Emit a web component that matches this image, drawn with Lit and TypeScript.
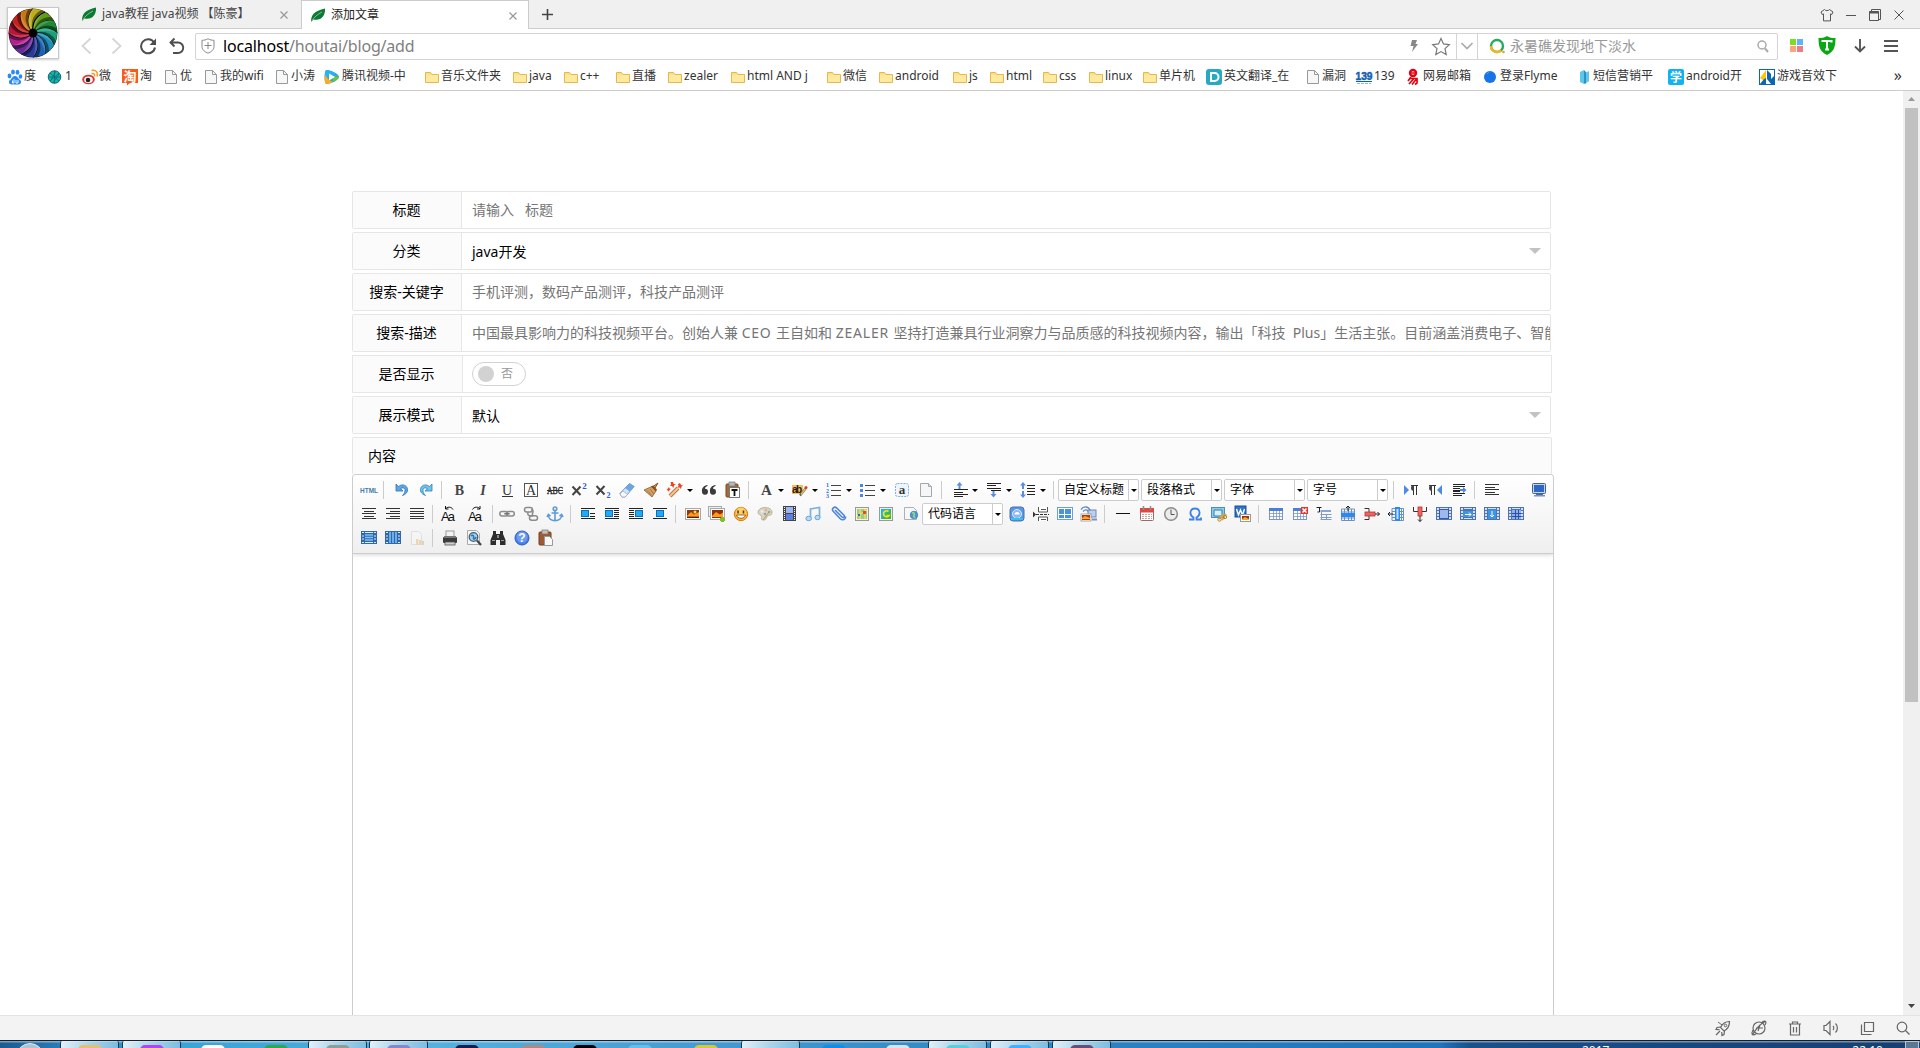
import { LitElement, html, svg, css, nothing, type SVGTemplateResult, type TemplateResult } from "lit";
import { customElement } from "lit/decorators.js";
import { styleMap } from "lit/directives/style-map.js";

type G = SVGTemplateResult;

const lines = (rows: number[][], color = "#333") =>
  svg`${rows.map(([x, y, w]) => svg`<rect x=${x} y=${y} width=${w} height="1" fill=${color}/>`)}`;

const grid = (color: string, head: string, fill = "#fff") => svg`
  <rect x="1.5" y="2.5" width="13" height="11" fill=${fill} stroke=${color}/>
  <rect x="1" y="2" width="14" height="3" fill=${head}/>
  <path d="M5.5 5v9M8.5 5v9M11.5 5v9M1 7.5h14M1 10.5h14" stroke=${color} fill="none" opacity=".8"/>`;

const blueTable = (inner: G) => svg`
  <rect x="0" y="1" width="16" height="13" fill="#5073ae"/>
  <path d="M1 2h2v2H1zM4 2h8v1H4zM13 2h2v2h-2zM1 5h2v2H1zM1 8h2v2H1zM13 5h2v2h-2zM13 8h2v2h-2zM1 11h2v2H1zM13 11h2v2h-2z" fill="#cfe2f8"/>
  ${inner}`;

const float = (x: number, rows: number[][]) => svg`
  <rect x=${x} y="4" width="8" height="7" fill="#0a6fc0"/><rect x=${x + 1} y="5" width="6" height="5" fill="#23a9f5"/>
  ${lines(rows, "#222")}`;

const icons: Record<string, G> = {
  html: svg`<text x="9" y="10.500" font-size="8" font-weight="700" text-anchor="middle" textLength="18" lengthAdjust="spacingAndGlyphs" fill="#3f7cab" font-family="Liberation Sans">HTML</text>`,
  undo: svg`<path d="M2 2v7h7L6.600 6.800C9 5 11.500 6 11 9c-.2 1.600-1 3-2.500 4.500C13 12 14.500 8.500 13 5.500 11.500 2.500 7.500 2 4.500 4.500z" fill="#5aa7e6" stroke="#2d72b8" stroke-width=".8"/>`,
  redo: svg`<path d="M14 2v7H7l2.400-2.200C7 5 4.500 6 5 9c.2 1.600 1 3 2.500 4.500C3 12 1.500 8.500 3 5.500 4.500 2.500 8.500 2 11.500 4.500z" fill="#6fc0ec" stroke="#2d82b8" stroke-width=".8"/>`,
  bold: svg`<text x="8.500" y="13" font-size="14" font-weight="700" text-anchor="middle" fill="#444">B</text>`,
  italic: svg`<text x="8" y="13" font-size="14" font-weight="700" font-style="italic" text-anchor="middle" fill="#444">I</text>`,
  underline: svg`<text x="8" y="12.500" font-size="14" text-anchor="middle" fill="#333">U</text><rect x="3" y="14" width="11" height="1" fill="#333"/>`,
  abox: svg`<rect x="1.500" y="1.500" width="13" height="13" fill="#fff" stroke="#555"/><text x="8" y="13" font-size="14" text-anchor="middle" fill="#333">A</text>`,
  strike: svg`<text x="8" y="12" font-size="10" text-anchor="middle" textLength="16" lengthAdjust="spacingAndGlyphs" fill="#222" stroke="#222" stroke-width=".3">ABC</text><rect x="0" y="8" width="16" height="1" fill="#333"/>`,
  sup: svg`<path d="M1.500 4.500l8 8.500M9.500 4.500L1.500 13" stroke="#444" stroke-width="2"/><text x="13.500" y="6.500" font-size="9" font-weight="700" text-anchor="middle" fill="#2a5bd7">2</text>`,
  sub: svg`<path d="M1.500 4l8 8.500M9.500 4l-8 8.500" stroke="#444" stroke-width="2"/><text x="13.500" y="15.500" font-size="8" font-weight="700" text-anchor="middle" fill="#2a5bd7">2</text>`,
  eraser: svg`<path d="M.8 11.500L10.500 1.500l4.700 3-9 10.500H3z" fill="#cfe4fa" stroke="#6d9ad0"/><path d="M6 6l4.500-4.500 4.700 3-4.400 5z" fill="#6fa5e0"/><path d="M1 12l3-3 4.500 3.500L6 15H3z" fill="#f7f7fa" stroke="#a8a8b4" stroke-width=".7"/>`,
  brush: svg`<path d="M15 1l-3 5-2-1.500z" fill="#d99a54" stroke="#8a4e1a"/><path d="M1 8l8-3.500L13 9l-4 6z" fill="#d3a068" stroke="#8a5a2c" stroke-width=".8"/><path d="M8 4.500l5 5 1-2-4-4z" fill="#8b4a18"/><path d="M4 8.500l5 5M7 7l4 5" stroke="#9a6830" stroke-width=".8"/>`,
  wand: svg`<path d="M3 14L11 6" stroke="#b97a45" stroke-width="4"/><path d="M3 14L11 6" stroke="#f0c694" stroke-width="2"/><path d="M6 0l.8 2L9 2.500 7 3.500 6.500 6 5 4 3 4l1.200-1.700L3.500 0zM13 1l1 2 2 .5-1.500 1L14 7l-1.500-1.500-2 0L11.500 4l-.5-2zM2 5l.5 1.500L4 7 2.500 8 2 10 1 8.500-.5 8 .5 7z" fill="#ee4023"/>`,
  quote: svg`<path d="M6.500 3C3 3.500.500 6 1 9.500a3 3 0 1 0 3-2.800C4 5.500 5 4.500 6.500 4zM14.500 3C11 3.500 8.500 6 9 9.500a3 3 0 1 0 3-2.800c0-1.200 1-2.200 2.500-2.700z" fill="#3b3b3b"/>`,
  pastetext: svg`<rect x="1" y="2" width="12" height="13" rx="1" fill="#a56a3a" stroke="#7c4a20"/><rect x="4" y="0" width="6" height="4" fill="#b9b9b9" stroke="#777" stroke-width=".7"/><rect x="4.500" y="5.500" width="10" height="10" fill="#fff" stroke="#777"/><path d="M6.500 8h6M9.500 8v6" stroke="#111" stroke-width="1.800"/>`,
  forecolor: svg`<text x="8.500" y="12.500" font-size="15" font-weight="700" text-anchor="middle" fill="#444">A</text>`,
  backcolor: svg`<rect x="0" y="3" width="11" height="9" fill="#fbbd5a"/><text x="5" y="11" font-size="10" font-weight="700" font-family="Liberation Sans" text-anchor="middle" textLength="10" fill="#222">ab</text><path d="M8 13.500l6-7.500" stroke="#555" stroke-width="2.200"/><path d="M9 12.500l4.500-6" stroke="#e8c860" stroke-width="1.300"/><circle cx="14" cy="5.500" r="1.500" fill="#e03a2a"/>`,
  ol: svg`<text x="0" y="5" font-size="6" font-weight="700" fill="#2a6bd7">1</text><text x="0" y="10.500" font-size="6" font-weight="700" fill="#2a6bd7">2</text><text x="0" y="16" font-size="6" font-weight="700" fill="#2a6bd7">3</text>${lines([[5, 3, 10], [5, 8, 10], [5, 13, 10]], "#444")}`,
  ul: svg`<path d="M0 2h3v3H0zM0 7h3v3H0zM0 12h3v3H0z" fill="#4a86e8"/>${lines([[5, 3, 10], [5, 8, 10], [5, 13, 10]], "#444")}`,
  anchorbox: svg`<rect x="1.500" y="1.500" width="13" height="13" rx="2" fill="#eef5fd" stroke="#7fb0ea" stroke-dasharray="2 1"/><text x="8" y="12" font-size="13" font-weight="700" text-anchor="middle" fill="#333">a</text>`,
  blank: svg`<path d="M2.500 1.500h8l3 3v10h-11z" fill="#f4f6f8" stroke="#a3a8ad"/><path d="M10.500 1.500v3h3" fill="#ddd" stroke="#a3a8ad"/>`,
  rowtop: svg`<path d="M7.500 0l3 3.500h-2V7h-2V3.500h-2z" fill="#5b8fdc"/>${lines([[2, 7, 14], [2, 10, 9], [2, 12, 14], [2, 14, 9]], "#222")}`,
  rowbot: svg`${lines([[1, 1, 14], [1, 3, 9], [1, 6, 14], [5, 8, 10]], "#222")}<path d="M7.500 15.500l3-3.500h-2V9h-2v3h-2z" fill="#5b8fdc"/>`,
  lineheight: svg`<path d="M3 0l3 3.500H4v9h2L3 16l-3-3.500h2v-9H0z" fill="#5b8fdc"/><path d="M0 7h6v2H0z" fill="#f9f9f9"/>${lines([[7, 3, 8], [7, 6, 8], [7, 9, 8], [7, 12, 8]], "#222")}`,
  ltr: svg`<path d="M1 3l5 5-5 5z" fill="#4a8be8"/><path d="M10.500 13V3M13.500 13V3M8 3.500h7" stroke="#333" fill="none"/><path d="M11 3a3 3 0 0 0 0 6z" fill="#444"/>`,
  rtl: svg`<path d="M15 3l-5 5 5 5z" fill="#4a8be8"/><path d="M4.500 13V3M7.500 13V3M2 3.500h7" stroke="#333" fill="none"/><path d="M5 3a3 3 0 0 0 0 6z" fill="#444"/>`,
  indent: svg`${lines([[2, 2, 12], [2, 4, 12], [2, 6, 7], [2, 8, 7], [2, 9, 7], [2, 11, 12], [2, 13, 9]], "#222")}<path d="M9 7h3V5l3.500 3L12 11V9H9z" fill="#4a86e8"/>`,
  left: lines([[1, 2, 14], [1, 5, 10], [1, 7, 14], [1, 10, 10], [1, 12, 14]]),
  center: lines([[1, 2, 14], [3, 5, 10], [1, 7, 14], [3, 10, 10], [1, 12, 14]]),
  right: lines([[1, 2, 14], [5, 5, 10], [1, 7, 14], [5, 10, 10], [1, 12, 14]]),
  justify: lines([[1, 2, 14], [1, 5, 14], [1, 7, 14], [1, 10, 14], [1, 12, 14]]),
  screen: svg`<rect x="1.500" y="1.500" width="13" height="10" rx="1" fill="#c4d6f0" stroke="#45618e"/><rect x="3" y="3" width="10" height="7" fill="#2f67c8"/><rect x="5" y="12" width="7" height="1" fill="#4e6f9e"/><rect x="3" y="13" width="11" height="1.500" fill="#7c94b8"/>`,
  upper: svg`<text x="0" y="14.500" font-size="13" font-family="Liberation Sans" textLength="14" fill="#111">Aa</text><path d="M4.500 3c1.500-2.500 6-2.500 7.500.5M4.500 0v3h3" fill="none" stroke="#111"/>`,
  lower: svg`<text x="0" y="14.500" font-size="13" font-family="Liberation Sans" textLength="14" fill="#111">Aa</text><path d="M12 3C10.500.5 6 .5 4.500 3.500M12 0v3H9" fill="none" stroke="#111"/>`,
  link: svg`<g fill="none" stroke="#8c8c8c" stroke-width="1.500"><rect x=".8" y="5.500" width="8" height="4.500" rx="2.200"/><rect x="7.300" y="5.500" width="8" height="4.500" rx="2.200"/></g><path d="M5 7.800h6" stroke="#666"/>`,
  unlink: svg`<g fill="none" stroke="#8c8c8c" stroke-width="1.500"><rect x="1.500" y="1.500" width="8" height="4.500" rx="2.200"/><rect x="6.500" y="9.700" width="8" height="4.500" rx="2.200"/><path d="M8 4c4 0 1 3 1 7M5 6c-1 3 1 4 3 4"/></g>`,
  anchor: svg`<g fill="none" stroke="#5f9bd8" stroke-width="1.600"><circle cx="8" cy="2.800" r="1.800"/><path d="M8 5v9.500M4.500 7h7M1.200 8.500c0 4 3 6.200 6.800 6.200s6.800-2.200 6.800-6.200M0 11l1.300-2.500L3.500 10M16 11l-1.300-2.500L12.500 10"/></g>`,
  fnone: svg`${lines([[1, 2, 14], [10, 7, 5], [10, 10, 5], [1, 12, 14]], "#222")}<rect x="1" y="4" width="8" height="7" fill="#0a6fc0"/><rect x="2" y="5" width="6" height="5" fill="#23a9f5"/>`,
  fleft: float(1, [[1, 2, 14], [10, 4, 5], [10, 6, 5], [10, 8, 5], [10, 10, 5], [1, 12, 14]]),
  fright: float(7, [[1, 2, 14], [1, 4, 5], [1, 6, 5], [1, 8, 5], [1, 10, 5], [1, 12, 14]]),
  fcenter: float(4, [[1, 2, 14], [1, 12, 14]]),
  image: svg`<rect x=".5" y="2.500" width="15" height="11" fill="#fff" stroke="#a9a9a9"/><rect x="2" y="4" width="12" height="8" fill="#8b3a10"/><path d="M2 10l4-4 3 2.500 5-2.500v4.500H2z" fill="#ff9a1f"/><path d="M2 11h12v1H2z" fill="#5a1c05"/><circle cx="10" cy="6" r="1.500" fill="#ffd65a"/>`,
  images: svg`<rect x="-.5" y=".5" width="13" height="10" fill="#eee" stroke="#aaa"/><rect x="1.500" y="2.500" width="14" height="11" fill="#fff" stroke="#aaa"/><rect x="3" y="4" width="11" height="8" fill="#8b330c"/><path d="M3 10l4-4 4 2.500 3-2v4.500H3z" fill="#ff9a1f"/><path d="M11 13.500h5M13.500 11v5" stroke="#7cc22c" stroke-width="3"/>`,
  smile: svg`<circle cx="8" cy="8" r="6.700" fill="#f9b13c" stroke="#d57f12"/><circle cx="8" cy="6.500" r="5" fill="#fcd069"/><path d="M5 4.500v3M10.500 4.500v3" stroke="#5e3205" stroke-width="1.500"/><path d="M3.500 9h9c-.8 4.300-8.200 4.300-9 0z" fill="#fff" stroke="#8a4d10" stroke-width=".8"/>`,
  palette: svg`<path d="M8 1.500c4 0 7.500 2 7 5.500-.3 2.500-2.500 2-4 2.500s-.5 2.500-2.500 4c-2 1.300-5 .5-4-2C5.500 9 .5 9 1 6 1.500 3 4.500 1.500 8 1.500z" fill="#d9d3c2" stroke="#b0a890" stroke-width=".8"/><circle cx="5" cy="5.500" r="1.300" fill="#f0f0ee"/><circle cx="9" cy="4" r="1.200" fill="#e9ab96"/><circle cx="12" cy="6" r="1.300" fill="#8eb883"/><circle cx="8" cy="8" r="1.200" fill="#88a4cd"/><path d="M6 14l6-8" stroke="#c09556"/>`,
  film: svg`<rect x="2" y="0" width="13" height="15" fill="#444"/><rect x="5" y="1" width="7" height="6" fill="#9fb6f4"/><rect x="5" y="8" width="7" height="6" fill="#5d80df"/><path d="M3.500 1v14M13.500 1v14" stroke="#f4f4f4" stroke-width="1" stroke-dasharray="1 1"/>`,
  music: svg`<path d="M5.500 12V3l9-1.500V11" fill="none" stroke="#7cb1de" stroke-width="1.700"/><ellipse cx="3.700" cy="12.500" rx="2.800" ry="2.200" fill="#b7dbf6" stroke="#6aa2d2"/><ellipse cx="12.500" cy="11.500" rx="2.600" ry="2.200" fill="#b7dbf6" stroke="#6aa2d2"/>`,
  clip: svg`<path d="M5 4l7 7c1.500 1.500 3-.3 2-1.800L6.500 1.800C4.500 0 1.300 2.500 3 5l7 7.500c2.500 2.500 6 1 5.500-2" fill="none" stroke="#4f86d4" stroke-width="1.600"/>`,
  map: svg`<rect x="1.500" y="1.500" width="13" height="13" fill="#f5f2dd" stroke="#999"/><rect x="3" y="3" width="10" height="10" fill="#9dcc88"/><path d="M3 10l10-6M6 3v10M11 3v10" stroke="#f4e25c" stroke-width="1.300"/><path d="M9 5h3v3H9z" fill="#e04a34"/><path d="M4 8h2v2H4z" fill="#2e6ea8"/>`,
  gmap: svg`<rect x="1.500" y="1.500" width="13" height="13" fill="#eee" stroke="#999"/><path d="M3 3h10v10H3z" fill="#19b5e8"/><path d="M3 13l10-10v10z" fill="#3eb54c"/><path d="M10.500 5.500a3 3 0 1 0 .5 4h-2.500" stroke="#f8e600" stroke-width="1.700" fill="none"/>`,
  webapp: svg`<path d="M2.500 1.500h9l3 3v9h-12z" fill="#f7f7f7" stroke="#aab0b6"/><circle cx="12" cy="9" r="3.800" fill="#4b96d8" stroke="#2f6ea8" stroke-width=".6"/><path d="M10 7c2-1 3 1 2 2s0 2 1 3" stroke="#9cdc7a" stroke-width="1.500" fill="none"/>`,
  frame: svg`<rect x="1" y="1" width="14" height="14" rx="3" fill="#5a97e4" stroke="#4a6fae"/><circle cx="8" cy="8" r="4.500" fill="#8db8f6" stroke="#d5ebff"/><path d="M5.500 8.500a2.500 2.500 0 0 1 5 0z" fill="#fff"/><path d="M2 12h12v2H2z" fill="#39c0f0"/>`,
  pagebreak: svg`<path d="M5.500 1v5h9V1M5.500 15v-4h9v4" fill="#fff" stroke="#555"/><path d="M0 5.500l3 3-3 3z" fill="#333"/><path d="M3 8.500h13" stroke="#333" stroke-dasharray="3 1"/><path d="M8 3.500h5M8 13.500h5" stroke="#555"/>`,
  template: svg`<rect x=".5" y="1.500" width="15" height="12" fill="#fff" stroke="#6c9fd4"/><path d="M2 3h5v5H2zM8 3h6v5H8zM2 9h5v3H2zM8 9h6v3H8z" fill="#4a94dc"/>`,
  background: svg`<rect x="7" y="4" width="8" height="7" fill="#bcd0ee" stroke="#6d88b8"/><path d="M0 3.500c3-4 8-3 9 1M2 5.500c2-2.500 4-2 5 0" stroke="#5d88c8" stroke-width="1.300" fill="none"/><rect x="0" y="8" width="10" height="7" fill="#fff" stroke="#888" stroke-width=".7"/><rect x="1" y="9" width="8" height="5" fill="#aa3f12"/><path d="M1 12l3-2 5 2v1H1z" fill="#ffa526"/><path d="M11 13.500h5" stroke="#7a90b8" stroke-width="2"/>`,
  hr: svg`<rect x="1" y="7" width="14" height="1" fill="#111"/>`,
  calendar: svg`<rect x="1.500" y="2.500" width="13" height="12" rx="1" fill="#fff" stroke="#a06868"/><rect x="1" y="2" width="14" height="4.500" fill="#db4a42"/><path d="M4.500 0v4M11.500 0v4" stroke="#8d8d8d" stroke-width="1.500"/><path d="M3 8.500h10M3 10.500h10M3 12.500h10" stroke="#c3a2a2" stroke-dasharray="2 1"/>`,
  clock: svg`<circle cx="8" cy="8" r="6.300" fill="#ececec" stroke="#8d8d8d" stroke-width="1.500"/><path d="M8 3.500V8.500h3.500" stroke="#555" fill="none"/>`,
  omega: svg`<path d="M2 13.500h4.500v-2C2 9 2.500 2.500 8 2.500s6 6.500 1.500 9v2H14v-2" fill="none" stroke="#3f82e4" stroke-width="1.800"/>`,
  snap: svg`<rect x="0.500" y="1.500" width="13" height="10" fill="#8fcbe8" stroke="#4a90b8"/><path d="M3 4h8v6H3z" fill="#d4effa" stroke="#387ca4"/><path d="M7.500 13l6-5M11 14l4-6" stroke="#d9a647" stroke-width="2"/><circle cx="8.500" cy="13.500" r="1.700" fill="none" stroke="#b5832c"/><circle cx="14" cy="11" r="1.700" fill="none" stroke="#b5832c"/>`,
  word: svg`<rect x="0" y="0" width="11" height="11" fill="#2f74c4" stroke="#1c4f92"/><path d="M1.500 3l2 6 2-5 2 5 2-6" fill="none" stroke="#fff" stroke-width="1.400"/><rect x="5.500" y="8.500" width="10" height="7" fill="#fff" stroke="#999"/><rect x="7" y="10" width="7" height="4" fill="#8e3812"/><path d="M7 13l3-2 4 2v1H7z" fill="#ffa526"/>`,
  table: grid("#7a96c8", "#4b7fd6"),
  deltable: svg`${grid("#7a96c8", "#4b7fd6")}<rect x="9" y="1" width="7" height="7" fill="#e5372c"/><path d="M10.500 2.500l4 4M14.500 2.500l-4 4" stroke="#fff" stroke-width="1.500"/>`,
  before: svg`<path d="M.5 1.500h5M3.500 1.500v4.500H1.500" stroke="#222" fill="none"/><path d="M4 5h11M4.500 8.500h11M4.500 11.500h11M4.500 13.500h11M5.500 5v9M10.500 8v6" stroke="#7f9cc6" fill="none"/><rect x="5" y="4" width="10" height="2" fill="#87a6d6"/>`,
  insrow: svg`<path d="M1.500 3v11.500h13V3zM4.500 3v12M8.500 3v12M11.500 3v12M1.500 6h13M1.500 12h13" fill="none" stroke="#6e8fc4"/><rect x="1" y="7" width="14" height="4" fill="#2b8af0"/><path d="M8 5V0M6 2l2-2 2 2" stroke="#222" fill="none"/>`,
  delrow: svg`<path d="M.5 2.500h4.500V6M.5 13.500h4.500V10" stroke="#333" fill="none"/><rect x="1" y="6" width="10" height="4" fill="#ee6560" stroke="#b53430" stroke-width=".8"/><path d="M11 8h4.500M13.500 6l2 2-2 2" stroke="#222" fill="none"/>`,
  inscol: svg`<path d="M4 2.500h11.500v12H4zM4 5.500h12M4 8.500h12M4 11.500h12M13.500 2v13" fill="none" stroke="#6e8fc4"/><rect x="7" y="1" width="5" height="14" fill="#2b8af0"/><rect x="8.500" y="3" width="2" height="10" fill="#bfe0ff"/><path d="M5 8H0M2 6L0 8l2 2" stroke="#222" fill="none"/>`,
  delcol: svg`<path d="M1.500 1v4.500H6M14.500 1v4.500H10" stroke="#333" fill="none"/><rect x="6" y="1" width="4" height="9" fill="#ee6560" stroke="#b53430" stroke-width=".8"/><path d="M8 10v5.500M6 13.500l2 2 2-2" stroke="#222" fill="none"/>`,
  merge: blueTable(svg`<rect x="3.500" y="3.500" width="9" height="9" fill="#9db9f0" stroke="#3a5aa4"/>`),
  mergeright: blueTable(svg`<rect x="3" y="5" width="10" height="6" fill="#3d95e4"/><path d="M4 12.500h8" stroke="#cfe2f8"/><path d="M5 8.500h6M9 6.500l2 2-2 2" stroke="#fff" fill="none"/>`),
  mergedown: blueTable(svg`<rect x="4" y="3.500" width="8" height="9.500" fill="#3d95e4"/><path d="M8 5v6M6 9l2 2 2-2" stroke="#fff" fill="none"/>`),
  split: blueTable(svg`<rect x="4" y="4" width="9" height="9" fill="#8fb0f0"/><path d="M7.500 4v9M10.500 4v9M4 7.500h9M4 10.500h9" stroke="#2c4fa0"/>`),
  splitrow: svg`<rect x="0" y="1" width="16" height="13" fill="#2f68ae"/><path d="M1 2.500h2M4 2.500h8M13 2.500h2M1 12.500h2M4 12.500h8M13 12.500h2M1 6h2M1 9h2M13 6h2M13 9h2" stroke="#dcecfb"/><path d="M4 5h8M4 7.500h8M4 10h8" stroke="#7fc0f6" stroke-width="1.500"/>`,
  splitcol: svg`<rect x="0" y="1" width="16" height="13" fill="#2f68ae"/><path d="M1 2.500h2M13 2.500h2M1 12.500h2M13 12.500h2M1 6h2M1 9h2M13 6h2M13 9h2" stroke="#dcecfb"/><path d="M5 2v11M8 2v11M11 2v11" stroke="#7fc0f6" stroke-width="1.600"/>`,
  chart: svg`<g opacity=".35"><path d="M2.500 1.500h7l3 3v10h-10z" fill="#fafafa" stroke="#bbb"/><path d="M7 9h2.500v6H7z" fill="#e9a33a"/><path d="M10 10h2.500v5H10z" fill="#d9a066"/><path d="M13 11h2v4h-2z" fill="#9ab04c"/></g>`,
  print: svg`<rect x="4" y="1" width="8" height="6" fill="#f2f2f2" stroke="#999"/><rect x="1" y="7" width="14" height="6" rx="1" fill="#3a3a3a"/><rect x="2" y="6" width="12" height="2" fill="#777"/><rect x="3" y="12" width="10" height="3" fill="#cfcfcf" stroke="#555" stroke-width=".8"/>`,
  preview: svg`<path d="M1.500.5h9l3 3v11h-12z" fill="#f6f6f6" stroke="#aaa"/><circle cx="7.500" cy="7" r="4.300" fill="#9fd0ee" stroke="#4a5d6e" stroke-width="1.300"/><path d="M5 6c2-2 3 0 2.500 2s2 1 2.500-1" fill="none" stroke="#2a78ae" stroke-width="1.500"/><path d="M11 10.500l4 4.500" stroke="#444" stroke-width="2.200"/>`,
  find: svg`<path d="M3 1h3v3h4V1h3v3l2.500 6v5H10v-5H6v5H.5v-5L3 4z" fill="#2d2d2d"/><path d="M2 10.500h3M11 10.500h3" stroke="#999"/><path d="M7 5h2v3H7z" fill="#888"/>`,
  help: svg`<circle cx="8" cy="8" r="7" fill="#4b7fe8" stroke="#2c5abf"/><circle cx="8" cy="7" r="5.500" fill="#6d9bf2"/><text x="8" y="12.300" font-size="12" font-weight="700" font-family="Liberation Sans" text-anchor="middle" fill="#fff">?</text>`,
  paste: svg`<rect x="1" y="2" width="12" height="13" rx="1" fill="#9c5a35" stroke="#74401e"/><rect x="4" y="0" width="6" height="4" fill="#c9c2b4" stroke="#777" stroke-width=".7"/><path d="M6.500 6.500h5l3 3v6h-8z" fill="#f8f8f8" stroke="#999"/>`,
};

interface Tool { k: "i" | "m" | "s" | "sel" | "gap"; n?: string; w?: number; t?: string }
const I = (names: string): Tool[] => names.split(" ").map((n) => ({ k: "i", n }));
const M = (names: string): Tool[] => names.split(" ").map((n) => ({ k: "m", n }));
const S = (w: number): Tool => ({ k: "s", w });
const SEL = (t: string): Tool => ({ k: "sel", t });

const toolRows: Tool[][] = [
  [
    ...I("html"), S(10), ...I("undo redo"), S(9),
    ...I("bold italic underline abox strike sup sub eraser brush"), ...M("wand"),
    ...I("quote pastetext"), S(9), ...M("forecolor backcolor ol ul"), ...I("anchorbox blank"), S(10),
    ...M("rowtop rowbot lineheight"), S(8),
    SEL("自定义标题"), SEL("段落格式"), SEL("字体"), SEL("字号"), S(9),
    ...I("ltr rtl indent"), S(9), ...I("left"), { k: "gap" }, ...I("screen"),
  ],
  [
    ...I("center right justify"), S(6), { k: "i", n: "upper", w: 27 }, { k: "i", n: "lower", w: 27 }, S(6),
    ...I("link unlink anchor"), S(9), ...I("fnone fleft fright fcenter"), S(9),
    ...I("image images smile palette film music"), { k: "i", n: "clip", w: 25 }, ...I("map gmap webapp"),
    SEL("代码语言"), ...I("frame pagebreak template background"), S(10),
    ...I("hr calendar clock omega snap word"), S(9),
    ...I("table deltable before insrow delrow inscol delcol merge mergeright mergedown split"),
  ],
  [...I("splitrow splitcol chart"), S(9), ...I("print preview find help paste")],
];

const folder = svg`<path d="M1.500 3.500h5l1.500 2h6.500v8h-13z" fill="#fbe08a" stroke="#e8b64c"/><path d="M2 6h12v7H2z" fill="#fdea9f"/>`;
const page = svg`<path d="M2.500 1.500h7l4 4v9h-11z" fill="#f7f7f7" stroke="#999"/><path d="M9.500 1.500v4h4" fill="none" stroke="#999"/>`;

const marks: Record<string, G> = {
  folder, page,
  baidu: svg`<g fill="#2b8af3"><ellipse cx="2.500" cy="7" rx="1.900" ry="2.400"/><ellipse cx="6" cy="3" rx="1.900" ry="2.600"/><ellipse cx="10.500" cy="3.200" rx="1.900" ry="2.500"/><ellipse cx="13.500" cy="7.500" rx="1.800" ry="2.300"/><path d="M8 7c2.500 0 3 2.500 5 4s1 4.500-1.500 4.500H4.500C2 15.500 1 12.500 3 11S5.500 7 8 7z"/></g><path d="M5.500 11.500v2.500h1.500v-4M9 11v3h2v-3" stroke="#fff" fill="none" stroke-width=".9"/>`,
  one: svg`<circle cx="7.500" cy="8" r="6.300" fill="#18b5ac" stroke="#0a5560" stroke-width=".8"/><path d="M3 4l9 8M12 4l-9 8M7.500 1.500v13M1 8h13M4 11l5-9M6 14l6-9" stroke="#0a7078" stroke-width=".8"/>`,
  weibo: svg`<ellipse cx="6.500" cy="10.500" rx="6.300" ry="4.800" fill="#e23a36"/><ellipse cx="6.500" cy="10.700" rx="4.300" ry="3.200" fill="#fff"/><circle cx="6" cy="11" r="2.300" fill="#222"/><path d="M9.500 4.500c2.500-.5 3.500 1 3 3M9.500 1.500c4.500-1 7 2 5.500 6" stroke="#f49a2a" stroke-width="1.500" fill="none"/>`,
  tao: svg`<path d="M0 0h16v14H8l-3 2.500V14H0z" fill="#ff5a15"/><text x="8" y="12" font-size="13" font-weight="700" text-anchor="middle" fill="#fff" font-family="Noto Sans CJK SC">淘</text>`,
  tencent: svg`<path d="M2 1c5 0 13 4 13 7s-8 7-13 7c-2-3-2-11 0-14z" fill="#2aa5f0"/><path d="M2 1c4 0 8 2 10 4L1 9C.8 5 1 3 2 1z" fill="#26b4ee"/><path d="M1 6C0 10 1 14 2 15c3 0 5-1 7-2L5 11z" fill="#ffab1a"/><path d="M9 13c3-1.500 6-3.500 6-5l-6-1z" fill="#6cc72a"/><path d="M5 4.500l6 3.500-6 3.500z" fill="#fff"/>`,
  dict: svg`<rect width="16" height="16" rx="3" fill="#27a9c4"/><path d="M5 4h3.500a4 4 0 0 1 0 8H5z" fill="none" stroke="#fff" stroke-width="2"/>`,
  n139: svg`<text x="8" y="11" font-size="11" font-weight="700" text-anchor="middle" textLength="17" lengthAdjust="spacingAndGlyphs" fill="#1260b0" stroke="#1260b0" stroke-width=".5" font-family="Liberation Sans">139</text><path d="M0 12.500h16" stroke="#1260b0"/><path d="M1 14.500h14" stroke="#8dbce2" stroke-dasharray="3 1"/>`,
  netease: svg`<circle cx="8" cy="4" r="3" fill="none" stroke="#e60012" stroke-width="2.400"/><path d="M5.500 4h5M4 9.500h8v4.500l-2 1.500M6 8l-3 4M8.500 10l-4.500 5M11 10.500l-4 5" stroke="#e60012" stroke-width="1.700" fill="none"/>`,
  flyme: svg`<circle cx="8" cy="8" r="6" fill="#1673ea"/><path d="M5 5l2-2" stroke="#4f9af5"/>`,
  sms: svg`<path d="M4 3l4-2v14l-4-2zM9 4l4-2v10l-4 3z" fill="#5cc7e8"/><path d="M8 1l2 2v11l-2 1z" fill="#2a95c0"/>`,
  xue: svg`<rect width="16" height="16" rx="2" fill="#0fb2f2"/><text x="8" y="12.500" font-size="12" font-weight="700" text-anchor="middle" fill="#fff" font-family="Noto Sans CJK SC">学</text>`,
  game: svg`<rect x=".5" y=".5" width="15" height="15" fill="#fff" stroke="#0b68b0"/><path d="M1 9l6-8v8l-3 2z" fill="#ffc600"/><path d="M8 1l4 4v5l3-3v8h-3L8 10zM1 15l4-5 2-1v6z" fill="#0b68b0"/>`,
};

/* icon, label, advance to the next bookmark, gap between icon and label */
const bookmarks: [string, string, number, number][] = [
  ["baidu", "度", 40, 1], ["one", "1", 34, 2], ["weibo", "微", 40, 1], ["tao", "淘", 41, 2],
  ["page", "优", 40, 1], ["page", "我的wifi", 71, 1], ["page", "小涛", 50, 1], ["tencent", "腾讯视频-中", 99, 2],
  ["folder", "音乐文件夹", 88, 1], ["folder", "java", 51, 1], ["folder", "c++", 52, 1], ["folder", "直播", 52, 1],
  ["folder", "zealer", 63, 1], ["folder", "html AND j", 96, 1], ["folder", "微信", 52, 1], ["folder", "android", 74, 1],
  ["folder", "js", 37, 1], ["folder", "html", 53, 1], ["folder", "css", 46, 1], ["folder", "linux", 54, 1],
  ["folder", "单片机", 64, 1], ["dict", "英文翻译_在", 99, 2], ["page", "漏洞", 51, 1], ["n139", "139", 49, 2],
  ["netease", "网易邮箱", 77, 2], ["flyme", "登录Flyme", 94, 2], ["sms", "短信营销平", 92, 1], ["xue", "android开", 91, 2],
  ["game", "游戏音效下", 90, 2],
];

const leaf = html`<svg class="ic16" viewBox="0 0 16 16"><path d="M1 15c0-7 3-11 14-13.500C15.500 9 11 14 3.500 12.500z" fill="#0b7a34"/><path d="M1 15C4 10 8 7 12 5" stroke="#b5dcae" fill="none" stroke-width=".7"/></svg>`;

const wheelColors = ["#5f9c18", "#1d8a35", "#1ba07c", "#1c8fb8", "#1d62b4", "#2b3aa0", "#6a2a9c", "#b3208f", "#b8163a", "#c4221a", "#c8761a", "#bcae1c"];
const blade = (i: number, c: string) => svg`<g transform=${`rotate(${i * 30} 25 25)`}>
  <path d="M25 25Q23 10 37 4A24.200 24.200 0 0 1 45.900 12.800Q30.800 11 25 25z" fill=${c}/>
  <path d="M25 25Q23 10 37 4Q28 11 25 25z" fill="#fff" opacity=".18"/>
  <path d="M25 25Q30.800 11 45.900 12.800L43 9Q29 9 25 25z" fill="#000" opacity=".45"/>
  <path d="M25 25Q30.800 11 45.900 12.800" fill="none" stroke="#000" stroke-width="1"/></g>`;

/* taskbar cells: width, open window flag, peeking icon colour */
const tasks: [number, boolean, string][] = [
  [60, false, "orb"], [59, true, "#e8bf6a"], [3, false, ""], [59, true, "#b444f0"], [63, false, "#ffffff"],
  [64, false, "#2fa84a"], [59, true, "#8f9c98"], [2, false, ""], [59, true, "#8a86cc"], [77, false, "#1a1a50"],
  [55, false, "#b08a80"], [50, false, "#000000"], [60, false, "#65bdf0"], [71, false, "#d8c838"], [59, true, ""],
  [68, false, "#0f8de8"], [60, false, "#d8e4ec"], [59, true, "#58cfd8"], [3, false, ""], [59, true, "#3fb0ff"],
  [3, false, ""], [59, true, "#6b4d74"],
];

@customElement("app-root")
export class AppRoot extends LitElement {
  static styles = css`
    :host { display: block; width: 1920px; height: 1048px; overflow: hidden; background: #fff; color: #000;
      font: 14px/20px "Noto Sans", "Noto Sans CJK SC", sans-serif; }
    * { box-sizing: border-box; }
    .window { display: flex; flex-direction: column; height: 1048px; position: relative; }
    .ic16 { width: 16px; height: 16px; flex: none; display: block; overflow: visible; }
    .tabs { height: 29px; background: #f0f0f0; display: flex; padding-left: 71px; align-items: stretch; flex: none; border-bottom: 1px solid #ccc; }
    .tab { display: flex; align-items: center; width: 230px; padding: 0 12px 0 10px; font-size: 12px; gap: 5px; color: #444; }
    .tab.active { width: 228px; background: #fff; border: 1px solid #ccc; border-bottom: 0; height: 29px; color: #222; padding: 0 10px 0 8px; }
    .tab span { flex: 1; white-space: nowrap; }
    .tab svg.x { width: 8px; height: 8px; margin-right: 1px; margin-top: 2px; }
    .plus { width: 11px; height: 11px; margin: 9px 0 0 13px; }
    .controls { margin-left: auto; display: flex; align-items: center; gap: 10px; padding: 2px 14px 0 0; }
    .controls svg { width: 14px; height: 14px; }
    .avatar { position: absolute; left: 7px; top: 7px; width: 52px; height: 52px; background: #fff; border: 1px solid #c8c8c8; box-shadow: 0 1px 2px #0003; z-index: 2; }
    .avatar svg { width: 50px; height: 50px; display: block; }
    .nav { height: 33px; flex: none; display: flex; align-items: center; padding-left: 78px; }
    .nav > svg { flex: none; }
    .fwd { margin-left: 13px; }
    .reload { margin-left: 14px; }
    .back { margin-left: 11px; }
    .addr { display: flex; align-items: center; width: 1583px; height: 27px; border: 1px solid #d4d4d4; border-radius: 2px; margin-left: 9px; margin-top: 1px; padding-left: 5px; }
    .url { margin-left: 8px; font-size: 16px; color: #808080; flex: 1; letter-spacing: -.18px; }
    .url b { font-weight: 400; color: #000; }
    .bolt { margin-right: 12px; }
    .drop { width: 22px; height: 25px; border: solid #d4d4d4; border-width: 0 1px; display: grid; place-items: center; margin-left: 5px; }
    .search { width: 299px; display: flex; align-items: center; padding: 0 8px 0 11px; gap: 5px; color: #999; font-size: 14px; }
    .search span { flex: 1; }
    .apps { display: flex; align-items: center; margin-left: 12px; gap: 15px; }
    .marks { height: 29px; flex: none; display: flex; align-items: center; padding-left: 7px; border-bottom: 1px solid #ccc; font-size: 12px; color: #333; }
    .mark { display: flex; align-items: center; flex: none; white-space: nowrap; }
    .mark:nth-child(n+3) { position: relative; left: 1px; }
    .mark:nth-child(n+9) { left: 2px; }
    .mark svg { margin-top: 1px; }
    .more { margin-left: auto; padding-right: 18px; font-size: 16px; margin-top: -3px; color: #333; }
    .view { flex: 1; min-height: 0; display: flex; }
    .doc { flex: 1; padding: 100px 0 0 352px; overflow: hidden; display: flex; flex-direction: column; }
    .row { display: flex; width: 1199px; height: 38px; margin-bottom: 3px; border: 1px solid #e6e6e6; border-radius: 2px; flex: none; }
    .row.wide { width: 1200px; border-radius: 0; }
    .label { width: 109px; border-right: 1px solid #e6e6e6; background: #fbfbfb; text-align: center; line-height: 35px; flex: none; padding-right: 1px; }
    .wide .label { width: 110px; padding-right: 2px; }
    .val { flex: 1; min-width: 0; padding-left: 10px; line-height: 35px; white-space: pre; overflow: hidden; color: #757575; }
    .val em { font-style: normal; letter-spacing: .8px; }
    .wide .val { padding-left: 9px; display: flex; align-items: center; }
    .val.pick { color: #000; display: flex; align-items: center; justify-content: space-between; padding-right: 9px; }
    .caret { border: 6px solid transparent; border-top-color: #c2c2c2; border-bottom: 0; }
    .switch { width: 54px; height: 24px; border: 1px solid #d2d2d2; border-radius: 20px; display: flex; align-items: center; padding-left: 5px; gap: 7px; font-size: 12px; color: #999; line-height: 20px; }
    .knob { width: 16px; height: 16px; border-radius: 50%; background: #d2d2d2; }
    .row.head { width: 1200px; margin: 0; background: #fbfbfb; padding-left: 15px; line-height: 35px; border-radius: 2px 2px 0 0; height: 37px; border-bottom: 0; }
    .editor { width: 1202px; flex: 1; border: 1px solid #ccc; border-bottom: 0; border-radius: 4px 4px 0 0; overflow: hidden; }
    .bar { height: 79px; padding: 3px 2px 0 3px; background: linear-gradient(#fff, #efefef); border-bottom: 1px solid #ccc; box-shadow: 0 1px 4px #cccc; }
    .tools { display: flex; height: 24px; align-items: center; }
    .tools.second, .tools.third { padding-left: 1px; }
    .cell { width: 24px; flex: none; display: flex; align-items: center; justify-content: center; }
    .cell.menu { width: 34px; justify-content: flex-start; padding-left: 4px; gap: 4px; }
    .cell svg { font-family: "Liberation Serif", serif; }
    .tri { border: 3px solid transparent; border-top: 3px solid #000; border-bottom: 0; margin-top: 1px; }
    .sep { height: 18px; flex: none; padding-left: 3px; }
    .sep::before { content: ""; display: block; width: 1px; height: 18px; background: #ccc; }
    .combo { width: 81px; height: 22px; border: 1px solid #ccc; border-radius: 2px; background: #fff; margin-right: 2px; display: flex; font-size: 12px; line-height: 20px; flex: none; }
    .combo span { flex: 1; padding-left: 5px; white-space: nowrap; }
    .combo i { width: 10px; border-left: 1px solid #ccc; display: grid; place-items: center; }
    .gap { margin-left: auto; }
    .scroll { width: 17px; background: #f0f0f0; display: flex; flex-direction: column; align-items: center; justify-content: space-between; flex: none; }
    .scroll svg { width: 17px; height: 17px; }
    .thumb { width: 13px; height: 594px; background: #c1c1c1; }
    .rest { flex: 1; }
    .status { height: 25px; flex: none; background: #f3f3f3; border-top: 1px solid #e3e3e3; display: flex; justify-content: flex-end; align-items: center; gap: 20px; padding-right: 9px; }
    .taskbar { height: 8px; flex: none; overflow: hidden; display: flex; border-top: 1px solid #10202e;
      background: linear-gradient(#fff6 0 1px, #fff0 2px), linear-gradient(90deg, #1c5a90 0, #2b7cb4 60px, #3aa3d6 180px, #55b0de 440px, #4a9fd4 640px, #2f86c4 1000px, #1f74bd 1440px, #1a508c 1470px, #173f70 1920px); }
    .task { flex: none; height: 8px; display: flex; justify-content: center; align-items: flex-start; padding-top: 4px; overflow: hidden; }
    .task.open { border: solid #133a58; border-width: 0 1px; background: linear-gradient(#fff9, #fff0 1px), linear-gradient(100deg, #e2f0f8, #a9d3ea 50%, #7cbce0); border-radius: 2px 2px 0 0; }
    .peek { width: 24px; height: 12px; border-radius: 5px 5px 0 0; flex: none; }
    .peek.orb { width: 28px; height: 28px; border-radius: 50%; background: #a9c6d8; margin-top: -2px; border: 1px solid #dcebf4; }
    .tray { margin-left: auto; display: flex; color: #fff; font-size: 12px; line-height: 12px; width: 338px; }
    .tray span { padding-top: 4px; }
    .tray .clock { margin-left: auto; padding-right: 22px; }
    .peekdesk { width: 14px; height: 12px; border: 1px solid #b4c8d8; background: #5a7894; margin-right: 1px; }
  `;

  private icon(g: G) {
    return html`<svg class="ic16" viewBox="0 0 16 16">${g}</svg>`;
  }

  private tool(t: Tool) {
    switch (t.k) {
      case "s": return html`<div class="sep" style=${styleMap({ width: `${t.w}px` })}></div>`;
      case "gap": return html`<div class="gap"></div>`;
      case "sel": return html`<div class="combo"><span>${t.t}</span><i><b class="tri"></b></i></div>`;
      case "m": return html`<div class="cell menu">${this.icon(icons[t.n!])}<b class="tri"></b></div>`;
      default: return html`<div class="cell" style=${t.w ? styleMap({ width: `${t.w}px` }) : nothing}>${this.icon(icons[t.n!])}</div>`;
    }
  }

  private field(label: string, value: string | TemplateResult, pick = false) {
    return html`<div class="row"><div class="label">${label}</div><div class="val ${pick ? "pick" : ""}">${value}${pick ? html`<i class="caret"></i>` : nothing}</div></div>`;
  }

  render() {
    const x = html`<svg class="x" viewBox="0 0 8 8"><path d="M.5.5l7 7M7.500.5l-7 7" stroke="#999" stroke-width="1.200"/></svg>`;
    return html`<div class="window">
      <div class="tabs">
        <div class="tab">${leaf}<span>java教程 java视频 【陈豪】</span>${x}</div>
        <div class="tab active">${leaf}<span>添加文章</span>${x}</div>
        <svg class="plus" viewBox="0 0 11 11"><path d="M5.500 0v11M0 5.500h11" stroke="#444" stroke-width="1.600"/></svg>
        <div class="controls">
          <svg viewBox="0 0 14 14"><path d="M4.500 1.500L1 4l1.200 2.500 1.300-.6v7h7v-7l1.300.6L13 4 9.500 1.500C8.500 3 5.500 3 4.500 1.500z" fill="none" stroke="#555"/></svg>
          <svg viewBox="0 0 14 14"><path d="M2 7.500h10" stroke="#555"/></svg>
          <svg viewBox="0 0 14 14"><path d="M3.500 3V1.500h9v10H11M1.500 3.500h9v9h-9z" fill="none" stroke="#555"/><path d="M1 4.500h10" stroke="#555" stroke-width="2"/></svg>
          <svg viewBox="0 0 14 14"><path d="M2.500 2.500l9 9M11.500 2.500l-9 9" stroke="#555"/></svg>
        </div>
      </div>
      <div class="avatar"><svg viewBox="0 0 50 50"><circle cx="25" cy="25" r="24.500" fill="#222"/>${wheelColors.map((c, i) => blade(i, c))}<circle cx="25" cy="25" r="4.500" fill="#050505"/></svg></div>
      <div class="nav">
        <svg width="17" height="18" viewBox="0 0 17 18"><path d="M12.500 1.500L4.500 9l8 7.500" fill="none" stroke="#d5d5d5" stroke-width="1.800"/></svg>
        <svg class="fwd" width="17" height="18" viewBox="0 0 17 18"><path d="M4.500 1.500l8 7.500-8 7.500" fill="none" stroke="#d5d5d5" stroke-width="1.800"/></svg>
        <svg class="reload" width="18" height="18" viewBox="0 0 18 18"><path d="M15 5.500A7 7 0 1 0 16 10.500" fill="none" stroke="#4d4d4d" stroke-width="2"/><path d="M17 1.500v6.500h-6.500z" fill="#4d4d4d"/></svg>
        <svg class="back" width="18" height="18" viewBox="0 0 18 18"><path d="M2.500 5.500H10a5.200 5.200 0 0 1 0 10.500H5M6.500 1.500l-4 4 4 4" fill="none" stroke="#4d4d4d" stroke-width="1.900"/></svg>
        <div class="addr">
          <svg width="14" height="16" viewBox="0 0 14 16"><path d="M7 .7c2 1.300 4 1.600 6 1.600v6.200c0 3.500-3 5.500-6 6.700-3-1.200-6-3.200-6-6.700V2.300c2 0 4-.3 6-1.600z" fill="none" stroke="#888"/><path d="M7 4v7M3.500 7.500h7" stroke="#888"/></svg>
          <div class="url"><b>localhost</b>/houtai/blog/add</div>
          <svg class="bolt" width="10" height="14" viewBox="0 0 10 14"><path d="M3 1h5L6.500 5H9L3 13l1.500-6H1.500z" fill="#888"/></svg>
          <svg width="20" height="19" viewBox="0 0 20 19"><path d="M10 1.500l2.500 5.400 5.800.7-4.300 4 1.200 5.900L10 14.600l-5.200 2.900L6 11.600l-4.300-4 5.800-.7z" fill="none" stroke="#777" stroke-width="1.200"/></svg>
          <div class="drop"><svg width="14" height="8" viewBox="0 0 14 8"><path d="M1.500 1L7 6.500 12.500 1" fill="none" stroke="#aaa" stroke-width="1.700"/></svg></div>
          <div class="search">
            <svg class="ic16" viewBox="0 0 16 16"><circle cx="8" cy="8" r="6" fill="none" stroke="#22ac62" stroke-width="2.400"/><path d="M2 8a6 6 0 0 0 10 4.500" fill="none" stroke="#f7b51c" stroke-width="2.400"/><circle cx="14.500" cy="14" r="1.300" fill="#f39a1c"/></svg>
            <span>永暑礁发现地下淡水</span>
            <svg width="12" height="13" viewBox="0 0 12 13"><circle cx="5" cy="5" r="4" fill="none" stroke="#aaa" stroke-width="1.500"/><path d="M8 8.500l3 3.500" stroke="#aaa" stroke-width="2"/></svg>
          </div>
        </div>
        <div class="apps">
          <svg width="13" height="13" viewBox="0 0 13 13"><path d="M0 0h6v6H0z" fill="#7ddc1f"/><path d="M7 0h6v6H7z" fill="#5eb4f8"/><path d="M0 7h6v6H0z" fill="#fba578"/><path d="M7 7h6v6H7z" fill="#f07a86"/></svg>
          <svg width="18" height="19" viewBox="0 0 18 19"><path d="M9 0c2.500 1.800 5 2 8.500 2-.2 8-.5 13-8.500 17C1 15 .7 10 .5 2 4 2 6.500 1.800 9 0z" fill="#0aa814"/><path d="M4.500 6V5h9v1.500M9 5v8M7 13.500h4" stroke="#fff" stroke-width="2" fill="none"/></svg>
          <svg width="18" height="16" viewBox="0 0 18 16"><path d="M9 1v12M4 8.500l5 5 5-5" fill="none" stroke="#555" stroke-width="1.900"/></svg>
          <svg width="14" height="14" viewBox="0 0 14 14"><path d="M0 2h14M0 7h14M0 12h14" stroke="#555" stroke-width="2"/></svg>
        </div>
      </div>
      <div class="marks">
        ${bookmarks.map(([i, t, w, g]) => html`<div class="mark" style=${styleMap({ width: `${w}px`, gap: `${g}px` })}>${this.icon(marks[i])}<span>${t}</span></div>`)}
        <div class="more">»</div>
      </div>
      <div class="view">
        <div class="doc">
          ${this.field("标题", "请输入   标题")}
          ${this.field("分类", "java开发", true)}
          ${this.field("搜索-关键字", "手机评测，数码产品测评，科技产品测评")}
          ${this.field("搜索-描述", html`中国最具影响力的科技视频平台。创始人兼 <em>CEO </em>王自如和 <em>ZEALER </em>坚持打造兼具行业洞察力与品质感的科技视频内容，输出「科技  Plus」生活主张。目前涵盖消费电子、智能汽车`)}
          <div class="row wide"><div class="label">是否显示</div><div class="val"><div class="switch"><i class="knob"></i>否</div></div></div>
          ${this.field("展示模式", "默认", true)}
          <div class="row head">内容</div>
          <div class="editor"><div class="bar">
            ${toolRows.map((r, i) => html`<div class="tools ${["first", "second", "third"][i]}">${r.map((t) => this.tool(t))}</div>`)}
          </div></div>
        </div>
        <div class="scroll">
          <svg viewBox="0 0 17 17"><path d="M5 10l3.500-4L12 10z" fill="#999"/></svg>
          <div class="thumb"></div><div class="rest"></div>
          <svg viewBox="0 0 17 17"><path d="M5 6l3.500 4L12 6z" fill="#444"/></svg>
        </div>
      </div>
      <div class="status">
        ${[
          svg`<path d="M14.500 1.500c-4 0-7 2-9 6l3.500 3.500c4-2 5.500-5 5.500-9.500zM5.500 7L2 7.500l-1 2 3.500.2M9.500 11L9 14.500l-2 1-.3-3.500M1 15l4-4" fill="none" stroke="#666" stroke-width="1.200"/><circle cx="10.500" cy="5.500" r="1.300" fill="none" stroke="#666"/><path d="M3 2l4 3" stroke="#666"/>`,
          svg`<circle cx="8" cy="8" r="6" fill="none" stroke="#666" stroke-width="1.200"/><path d="M1 15C4 12 6 5 14.500 1.500M5 8h7M9 5L7 11M11 2c4-2 5 0 3 3M2 10c-2 4-1 6 3 4" fill="none" stroke="#666" stroke-width="1.200"/>`,
          svg`<path d="M2 4h12M5.500 4V2h5v2M3.500 4v11h9V4M6.500 7v5.500M9.500 7v5.500" fill="none" stroke="#666" stroke-width="1.200"/>`,
          svg`<path d="M1 5.500h2l4-4v13l-4-4H1zM10 6c1 1 1 3 0 4M12.500 3.500c2.500 2.500 2.500 6.500 0 9" fill="none" stroke="#666" stroke-width="1.200"/>`,
          svg`<path d="M5.500 2.500h9v9h-9zM2.500 4.500v10h10" fill="none" stroke="#666" stroke-width="1.200"/>`,
          svg`<circle cx="7" cy="7" r="4.800" fill="none" stroke="#666" stroke-width="1.200"/><path d="M10.500 10.500l4 4" stroke="#666" stroke-width="1.300"/>`,
        ].map((g) => this.icon(g))}
      </div>
      <div class="taskbar">
        ${tasks.map(([w, open, c]) => html`<div class="task ${open ? "open" : ""}" style=${styleMap({ width: `${w}px` })}>
          ${c === "orb" ? html`<i class="peek orb"></i>` : c ? html`<i class="peek" style=${styleMap({ background: c })}></i>` : nothing}</div>`)}
        <div class="tray"><span>2017</span><span class="clock">22:10</span><div class="peekdesk"></div></div>
      </div>
    </div>`;
  }
}
